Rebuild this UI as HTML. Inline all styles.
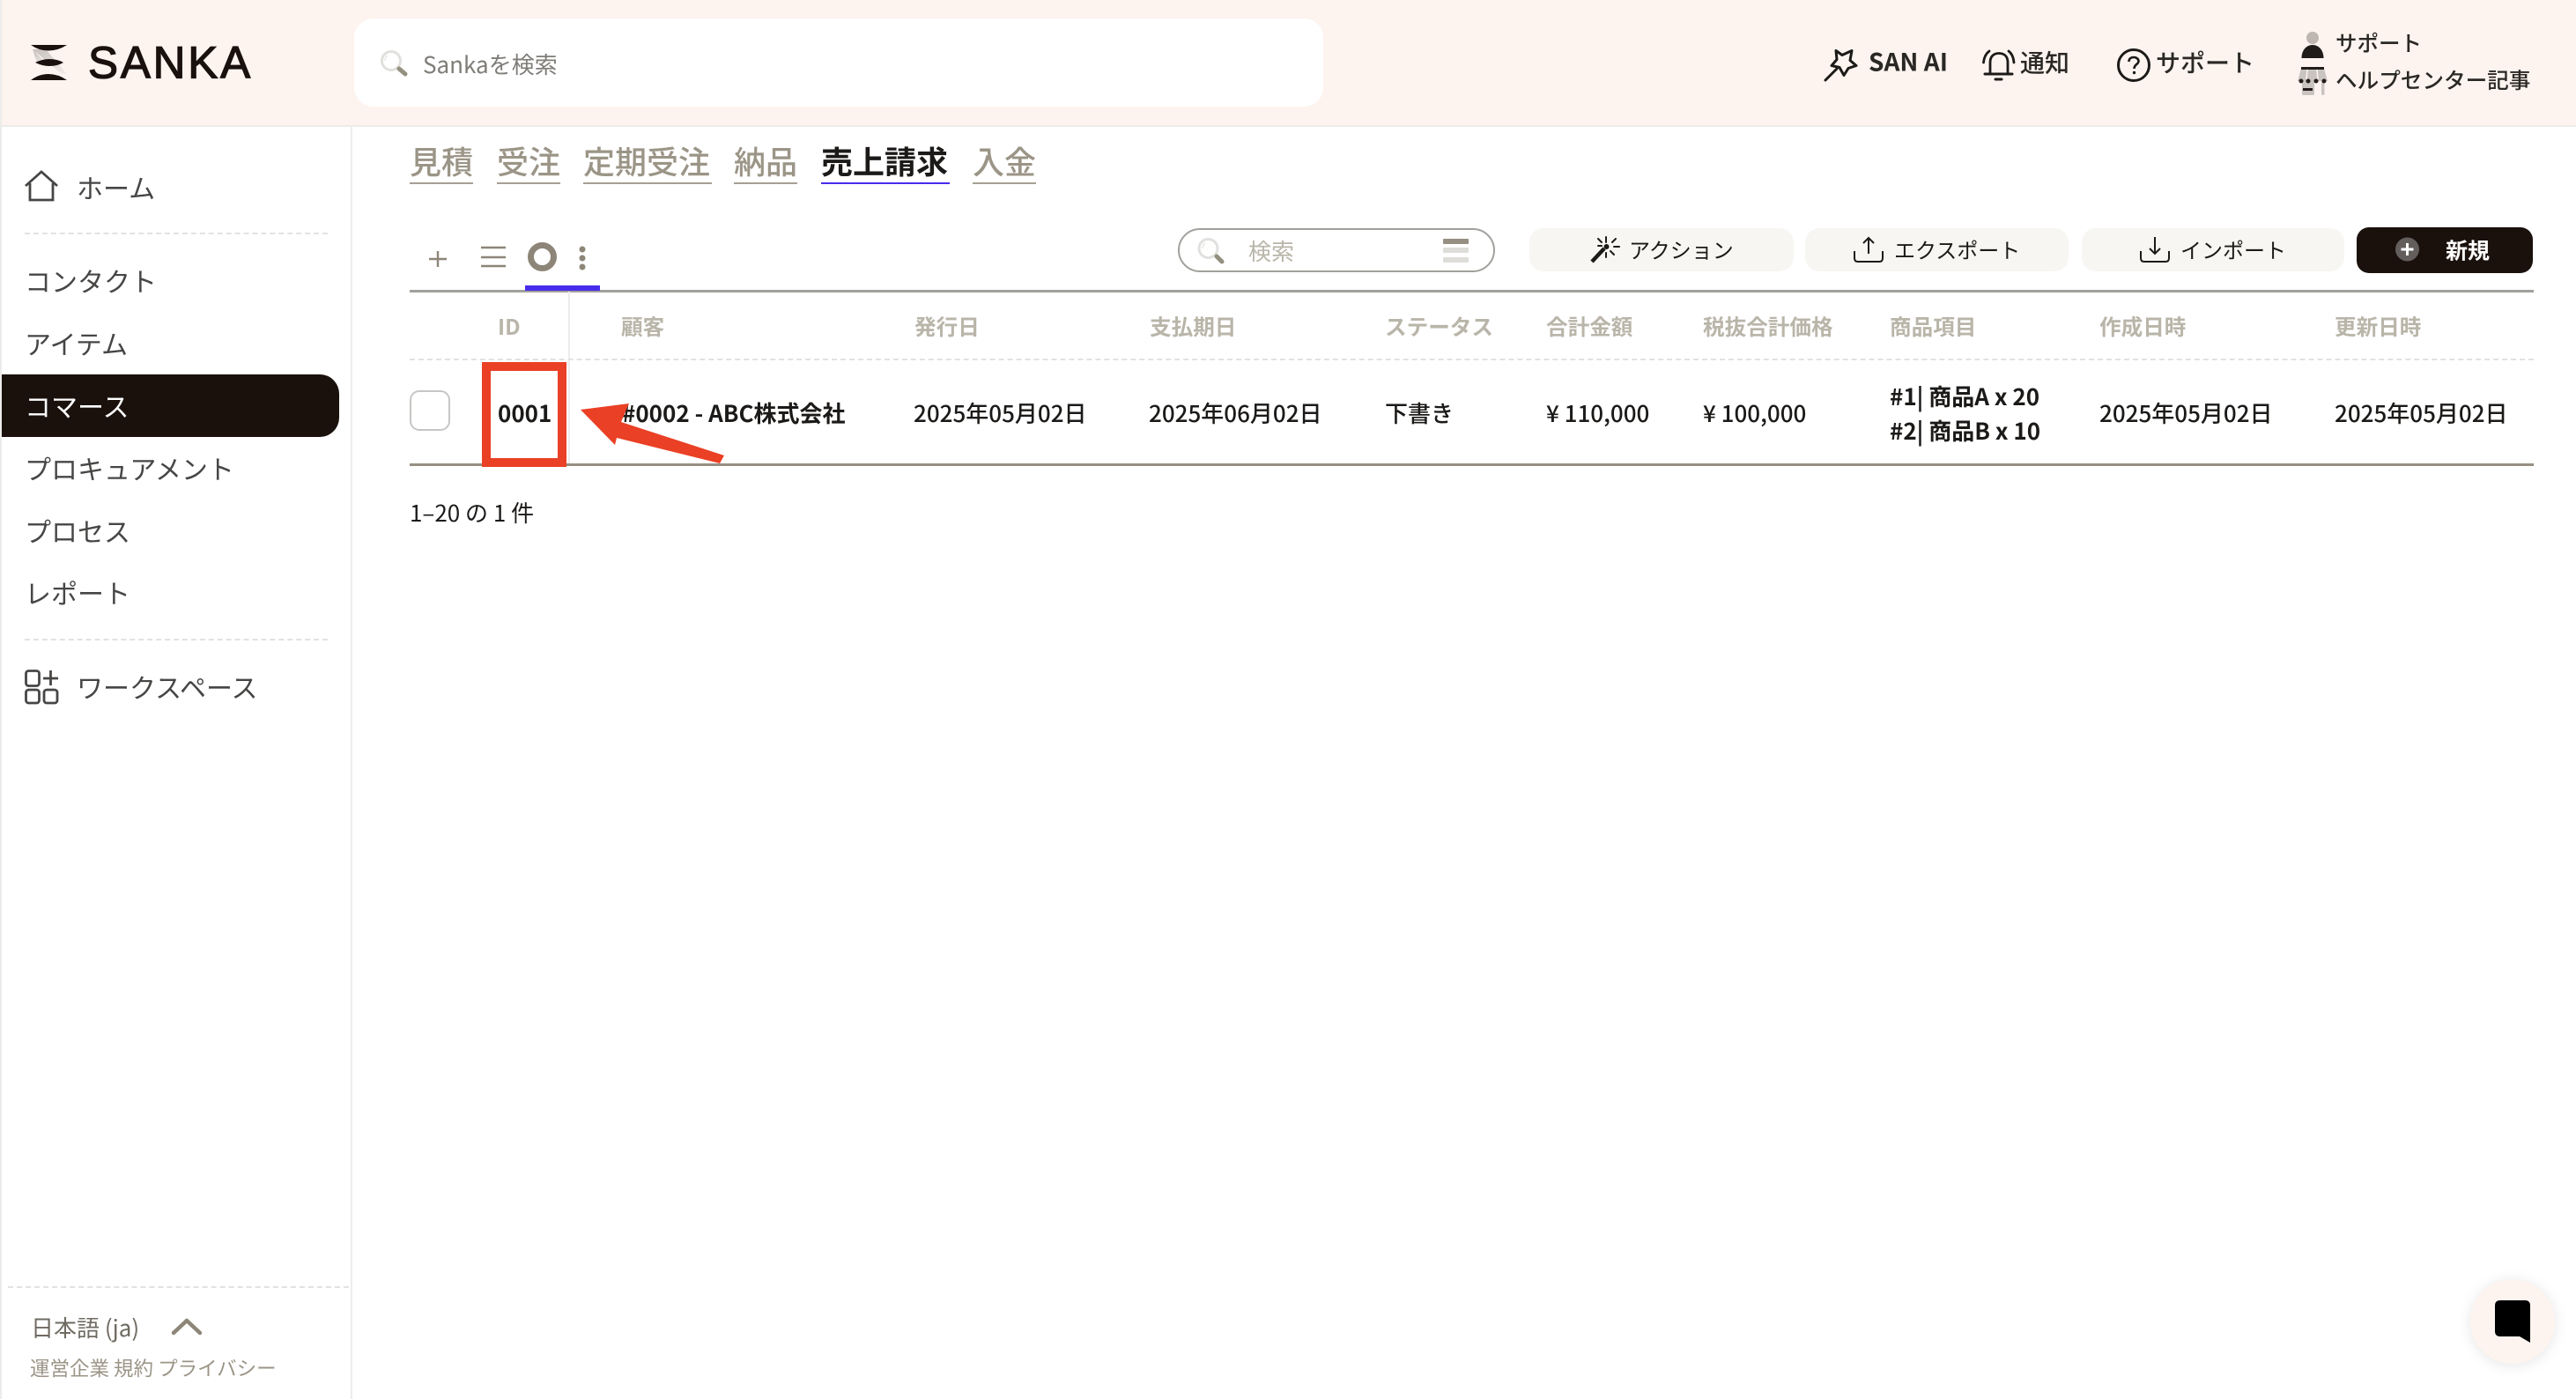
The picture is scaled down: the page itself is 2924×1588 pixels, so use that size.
<!DOCTYPE html>
<html lang="ja"><head><meta charset="utf-8"><title>Sanka</title>
<style>
html,body{margin:0;padding:0;background:#fff}
body{width:2924px;height:1588px;position:relative;overflow:hidden;font-family:"Noto Sans CJK JP","Liberation Sans",sans-serif;color:#1c1a18}
.a{position:absolute}
.t{position:absolute;white-space:nowrap;transform:translateY(-50%);line-height:1.4}
.s{font-size:30px;color:#474645}
.h{font-size:24.600px;font-weight:700;color:#b9b5a9}
.v{font-size:26px;font-weight:500;color:#1c1a18}
.b{font-weight:700}
.tab{font-size:36px;font-weight:500;color:#9b9587;top:182px}
.u{position:absolute;height:2px;background:#a5a095;top:207px}
.btn{position:absolute;background:#f7f6f3;border-radius:16px;top:259px;height:49px}
.d{position:absolute;height:0;border-top:2px dashed #e2e2e0}
svg{position:absolute;overflow:visible}
</style></head><body>
<!-- structure -->
<div class="a" style="left:0;top:0;width:2924px;height:142px;background:#fdf4ef"></div>
<div class="a" style="left:0;top:142px;width:2924px;height:2px;background:#ececea"></div>
<div class="a" style="left:0;top:0;width:2px;height:1588px;background:#ececea"></div>
<div class="a" style="left:398px;top:144px;width:2px;height:1444px;background:#ececea"></div>

<!-- logo -->
<svg style="left:0;top:0" width="100" height="100">
<defs><linearGradient id="g" x1="0" y1="0" x2="1" y2="1"><stop offset="0" stop-color="#bdb9b5"/><stop offset="1" stop-color="#f3eeea"/></linearGradient></defs>
<polygon points="37,56 52,56 76,84 70,84" fill="url(#g)" opacity=".9"/>
<polygon points="37,56 42,71 52,71" fill="url(#g)"/>
<path d="M35 51H76Q66 57.500 55 57.500Q44 57.500 35 51Z" fill="#1a110d"/>
<path d="M40 71Q48 67 56 67Q65 67 72 71Q65 75 56 75Q48 75 40 71Z" fill="#1a110d"/>
<path d="M35 91H76Q66 84 55 84Q44 84 35 91Z" fill="#1a110d"/>
</svg>
<div class="t" style="left:100px;top:71px;font-family:'Liberation Sans',sans-serif;font-size:51px;letter-spacing:2.800px;color:#1a110d;-webkit-text-stroke:1.300px #1a110d">SANKA</div>

<!-- search -->
<div class="a" style="left:402px;top:21px;width:1100px;height:100px;background:#fff;border-radius:22px"></div>
<svg style="left:431px;top:57px" width="32" height="30"><circle cx="13" cy="12" r="10.500" fill="none" stroke="#e0e0dd" stroke-width="3"/><path d="M9 6Q6 8 6 12" stroke="#e6e6e3" stroke-width="1.500" fill="none"/><path d="M22 21L29 27" stroke="#94907f" stroke-width="5" stroke-linecap="round"/></svg>
<div class="t" style="left:480px;top:73px;font-size:26px;color:#7f7d78">Sankaを検索</div>

<!-- header right -->
<svg style="left:2071px;top:56px" width="38" height="36" fill="none" stroke="#1c1a18" stroke-width="3" stroke-linejoin="round" stroke-linecap="round">
<path d="M1 35L14 22"/><path d="M13 2L20 7L31 2L29 13L36 19L27 22L22 30L17 21L8 19L14 12Z" transform="translate(0,-.5)"/></svg>
<div class="t b" style="left:2121px;top:70px;font-size:28px;color:#2a2825">SAN AI</div>
<svg style="left:2250px;top:56px" width="38" height="36" fill="none" stroke="#1c1a18" stroke-width="2.800" stroke-linecap="round">
<path d="M9 26V15C9 8 13 4.500 19 4.500S29 8 29 15V26"/><path d="M3 28H34" stroke-width="3"/><path d="M15 34H22" stroke-width="3"/><path d="M1.500 15C2 9 4 5 8 2"/><path d="M36 15C35.500 9 34 5 30 2"/></svg>
<div class="t" style="left:2293px;top:71px;font-size:28px;font-weight:500;color:#2a2825">通知</div>
<svg style="left:2403px;top:55px" width="38" height="38" fill="none" stroke="#1c1a18" stroke-width="3">
<circle cx="19" cy="19" r="17.500"/><path d="M13.500 15C13.500 11.500 16 10 19 10C22 10 24.500 12 24.500 14.500C24.500 18 19.500 18 19.500 23" stroke-width="2.600"/><circle cx="19.500" cy="27.500" r="1.700" fill="#1c1a18" stroke="none"/></svg>
<div class="t" style="left:2447px;top:71px;font-size:28px;font-weight:500;color:#2a2825">サポート</div>

<svg style="left:2600px;top:26px" width="60" height="90">
<circle cx="25" cy="17" r="7" fill="#bdb6b1"/>
<path d="M12.500 40C12.500 31 18 25 25 25S37.500 31 37.500 40Z" fill="#201c1a"/>
<path d="M12 52H38L42 66H8Z" fill="#c9c4bf"/>
<rect x="13" y="66" width="14" height="16" rx="1" fill="#c9c4bf"/>
<rect x="35" y="66" width="3.500" height="16" rx="1.700" fill="#c9c4bf"/>
<rect x="14" y="74" width="11" height="3" fill="#221d1a"/>
<rect x="12" y="50" width="26" height="3" fill="#221d1a"/>
<circle cx="12" cy="66" r="2.500" fill="#221d1a"/><circle cx="20" cy="66" r="2.500" fill="#221d1a"/><circle cx="29" cy="66" r="2.500" fill="#221d1a"/><circle cx="38" cy="66" r="2.500" fill="#221d1a"/>
<path d="M19 53L18 64M30 53L31 64" stroke="#fdf4ef" stroke-width="1.500"/>
</svg>
<div class="t" style="left:2651px;top:49px;font-size:24.500px;font-weight:500;color:#2a2825">サポート</div>
<div class="t" style="left:2651px;top:90px;font-size:24.600px;font-weight:500;color:#2a2825">ヘルプセンター記事</div>

<!-- sidebar -->
<svg style="left:28px;top:194px" width="40" height="36" fill="none" stroke="#474645" stroke-width="2.800"><path d="M1 17L19 1L37 17"/><path d="M6 14V33H32V14"/></svg>
<div class="t s" style="left:87px;top:212px">ホーム</div>
<div class="d" style="left:28px;top:264px;width:344px"></div>
<div class="t s" style="left:28px;top:318px">コンタクト</div>
<div class="t s" style="left:28px;top:389px">アイテム</div>
<div class="a" style="left:2px;top:425px;width:383px;height:71px;background:#1a110d;border-radius:0 22px 22px 0"></div>
<div class="t s" style="left:28px;top:460px;color:#fff">コマース</div>
<div class="t s" style="left:28px;top:531px">プロキュアメント</div>
<div class="t s" style="left:28px;top:602px">プロセス</div>
<div class="t s" style="left:28px;top:672px">レポート</div>
<div class="d" style="left:28px;top:725px;width:344px"></div>
<svg style="left:28px;top:760px" width="40" height="40" fill="none" stroke="#474645" stroke-width="2.800"><rect x="1.500" y="1.500" width="15" height="17" rx="3"/><rect x="1.500" y="23" width="15" height="15" rx="3"/><rect x="22" y="23" width="15" height="15" rx="3"/><path d="M29.500 1V18M21 10H38"/></svg>
<div class="t s" style="left:87px;top:779px">ワークスペース</div>
<div class="d" style="left:9px;top:1460px;width:387px"></div>
<div class="t" style="left:35px;top:1507px;font-size:26px;color:#6f6b62">日本語 (ja)</div>
<svg style="left:194px;top:1495px" width="36" height="22" fill="none" stroke="#8d8678" stroke-width="4.500" stroke-linecap="round" stroke-linejoin="round"><path d="M3 18L18 4L33 18"/></svg>
<div class="t" style="left:34px;top:1553px;font-size:22.500px;color:#9b9587">運営企業 規約 プライバシー</div>

<!-- tabs -->
<div class="t tab" style="left:465px">見積</div><div class="u" style="left:465px;width:72px"></div>
<div class="t tab" style="left:564px">受注</div><div class="u" style="left:564px;width:72px"></div>
<div class="t tab" style="left:662px">定期受注</div><div class="u" style="left:662px;width:146px"></div>
<div class="t tab" style="left:833px">納品</div><div class="u" style="left:833px;width:72px"></div>
<div class="t tab" style="left:932px;color:#1c1a18;font-weight:700">売上請求</div><div class="u" style="left:932px;width:146px;background:#472cec"></div>
<div class="t tab" style="left:1104px">入金</div><div class="u" style="left:1104px;width:72px"></div>

<!-- toolbar icons -->
<svg style="left:480px;top:270px" width="200" height="44" fill="none" stroke="#8d8678">
<path d="M17 15V33M7 24H27" stroke-width="2.400"/>
<path d="M66 11H94M66 22H94M66 32H94" stroke-width="2.600"/>
<circle cx="135.500" cy="21.500" r="13" stroke-width="7"/>
<circle cx="181" cy="13" r="3.500" fill="#8d8678" stroke="none"/><circle cx="181" cy="23" r="3.500" fill="#8d8678" stroke="none"/><circle cx="181" cy="33" r="3.500" fill="#8d8678" stroke="none"/>
</svg>
<div class="a" style="left:465px;top:329px;width:2411px;height:3px;background:#a2a09c"></div>
<div class="a" style="left:596px;top:324px;width:85px;height:6px;background:#472cec"></div>

<!-- table search -->
<div class="a" style="left:1337px;top:259px;width:360px;height:50px;box-sizing:border-box;border:2.500px solid #a2a09c;border-radius:25px;background:#fff"></div>
<svg style="left:1359px;top:270px" width="32" height="30"><circle cx="12.500" cy="12" r="10.500" fill="none" stroke="#e0e0dd" stroke-width="3"/><path d="M9 6Q6 8 6 12" stroke="#e6e6e3" stroke-width="1.500" fill="none"/><path d="M22 21L28 27" stroke="#94907f" stroke-width="5" stroke-linecap="round"/></svg>
<div class="t" style="left:1417px;top:285px;font-size:26px;color:#b9b5a9">検索</div>
<div class="a" style="left:1638px;top:271px;width:29px;height:6px;background:#968f82;border-radius:1px"></div>
<div class="a" style="left:1638px;top:281px;width:29px;height:6px;background:#deddd9;border-radius:1px"></div>
<div class="a" style="left:1638px;top:292px;width:29px;height:6px;background:#deddd9;border-radius:1px"></div>

<!-- buttons -->
<div class="btn" style="left:1736px;width:300px"></div>
<svg style="left:1805px;top:267px" width="34" height="34" fill="none" stroke="#1c1a18" stroke-linecap="round">
<path d="M2 30L16 15" stroke-width="4.500" stroke-linecap="butt"/><path d="M18 2V8M18 20V25M27 13H33M9 12H13M9 4L13 8M29 4L25 8M27 22L23 18" stroke-width="2"/><circle cx="18.500" cy="13" r="3" fill="#1c1a18" stroke="none"/></svg>
<div class="t" style="left:1849px;top:283px;font-size:24px;color:#1c1a18">アクション</div>
<div class="btn" style="left:2049px;width:299px"></div>
<svg style="left:2104px;top:268px" width="34" height="30" fill="none" stroke="#1c1a18" stroke-width="2"><path d="M17 20V2M11 8L17 2L23 8"/><path d="M1 17V25Q1 29 5 29H29Q33 29 33 25V17"/></svg>
<div class="t" style="left:2150px;top:283px;font-size:24px;color:#1c1a18">エクスポート</div>
<div class="btn" style="left:2363px;width:298px"></div>
<svg style="left:2429px;top:268px" width="34" height="30" fill="none" stroke="#1c1a18" stroke-width="2"><path d="M17 1V20M11 14L17 20L23 14"/><path d="M1 17V25Q1 29 5 29H29Q33 29 33 25V17"/></svg>
<div class="t" style="left:2475px;top:283px;font-size:24px;color:#1c1a18">インポート</div>
<div class="a" style="left:2675px;top:258px;width:200px;height:52px;background:#1a110d;border-radius:14px"></div>
<svg style="left:2719px;top:269px" width="27" height="28"><circle cx="13.500" cy="14" r="13.500" fill="#635e5c"/><path d="M13.500 7V21M6.500 14H20.500" stroke="#fff" stroke-width="3"/></svg>
<div class="t b" style="left:2776px;top:284px;font-size:25px;color:#fff">新規</div>

<!-- table -->
<div class="a" style="left:645px;top:331px;width:2px;height:197px;background:#ececea"></div>
<div class="t h" style="left:565px;top:370px">ID</div>
<div class="t h" style="left:705px;top:370px">顧客</div>
<div class="t h" style="left:1038px;top:370px">発行日</div>
<div class="t h" style="left:1305px;top:370px">支払期日</div>
<div class="t h" style="left:1572px;top:370px">ステータス</div>
<div class="t h" style="left:1755px;top:370px">合計金額</div>
<div class="t h" style="left:1933px;top:370px">税抜合計価格</div>
<div class="t h" style="left:2145px;top:370px">商品項目</div>
<div class="t h" style="left:2383px;top:370px">作成日時</div>
<div class="t h" style="left:2650px;top:370px">更新日時</div>
<div class="d" style="left:465px;top:407px;width:2411px"></div>
<div class="a" style="left:465px;top:526px;width:2411px;height:3px;background:#968f82"></div>

<div class="a" style="left:465px;top:443px;width:46px;height:46px;box-sizing:border-box;border:2.500px solid #c6c6c4;border-radius:11px;background:#fff"></div>
<div class="t v b" style="left:565px;top:469px">0001</div>
<div class="t v b" style="left:706px;top:469px">#0002 - ABC株式会社</div>
<div class="t v" style="left:1037px;top:469px">2025年05月02日</div>
<div class="t v" style="left:1304px;top:469px">2025年06月02日</div>
<div class="t v" style="left:1572px;top:469px">下書き</div>
<div class="t v" style="left:1755px;top:469px">¥ 110,000</div>
<div class="t v" style="left:1933px;top:469px">¥ 100,000</div>
<div class="t v b" style="left:2145px;top:450px">#1| 商品A x 20</div>
<div class="t v b" style="left:2145px;top:489px">#2| 商品B x 10</div>
<div class="t v" style="left:2383px;top:469px">2025年05月02日</div>
<div class="t v" style="left:2650px;top:469px">2025年05月02日</div>
<div class="t" style="left:465px;top:582px;font-size:26px;color:#1c1a18">1–20 の 1 件</div>

<!-- annotations -->
<div class="a" style="left:547px;top:411px;width:96px;height:119px;box-sizing:border-box;border:10px solid #ea4025"></div>
<svg style="left:0;top:0" width="2924" height="1588"><polygon points="659,465 714,458 705,479 822,517 817,526 700,497 698,505" fill="#ea4025"/></svg>

<!-- chat -->
<div class="a" style="left:2804px;top:1452px;width:96px;height:96px;border-radius:50%;background:#fdf4ef;box-shadow:0 2px 16px rgba(0,0,0,.1)"></div>
<svg style="left:2832px;top:1476px" width="40" height="48"><path d="M6 0H34Q40 0 40 6V48L28 41H6Q0 41 0 35V6Q0 0 6 0Z" fill="#000"/></svg>
</body></html>
